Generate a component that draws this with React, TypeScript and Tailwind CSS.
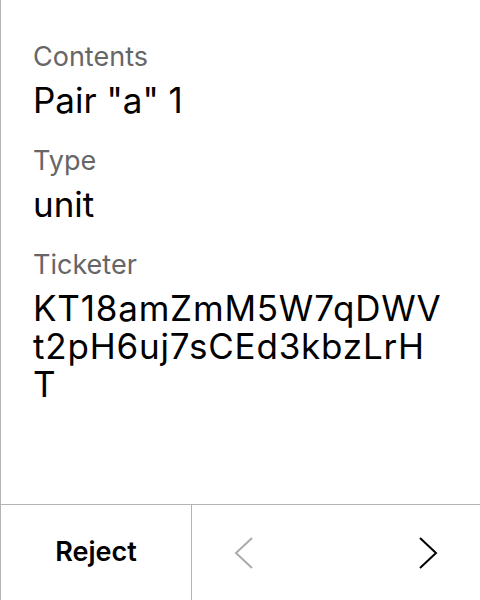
export default function App() {
    const fields = [
        { label: "Contents", value: 'Pair "a" 1', extra: "" },
        { label: "Type", value: "unit", extra: "" },
        { label: "Ticketer", value: "KT18amZmM5W7qDWVt2pH6uj7sCEd3kbzLrHT", extra: "tracking-[0.8px]" },
    ];

    return (
        <div className="w-[480px] h-[600px] bg-white border-l border-[#b3b3b3] flex flex-col font-['Inter',sans-serif]">
            <div className="flex-1 pl-8 pr-[35px] pt-[41px] flex flex-col gap-[26px]">
                {fields.map((f) => (
                    <div key={f.label} className="flex flex-col gap-2">
                        <span className="text-[27px] leading-[32px] text-[#666666]">{f.label}</span>
                        <span className={`text-[35px] leading-[38px] text-black break-all ${f.extra}`}>{f.value}</span>
                    </div>
                ))}
            </div>

            <div className="h-[96px] border-t border-[#b3b3b3] flex">
                <button className="w-[191px] border-r border-[#b3b3b3] text-[27px] font-semibold text-black">
                    Reject
                </button>
                <div className="flex-1 flex items-center justify-between px-[42px]">
                    <svg width="20" height="32" viewBox="0 0 20 32" fill="none" stroke="#ababab" strokeWidth="2">
                        <path d="M18 1 L2 16 L18 31" />
                    </svg>
                    <svg width="20" height="32" viewBox="0 0 20 32" fill="none" stroke="#000" strokeWidth="2">
                        <path d="M2 1 L18 16 L2 31" />
                    </svg>
                </div>
            </div>
        </div>
    );
}
